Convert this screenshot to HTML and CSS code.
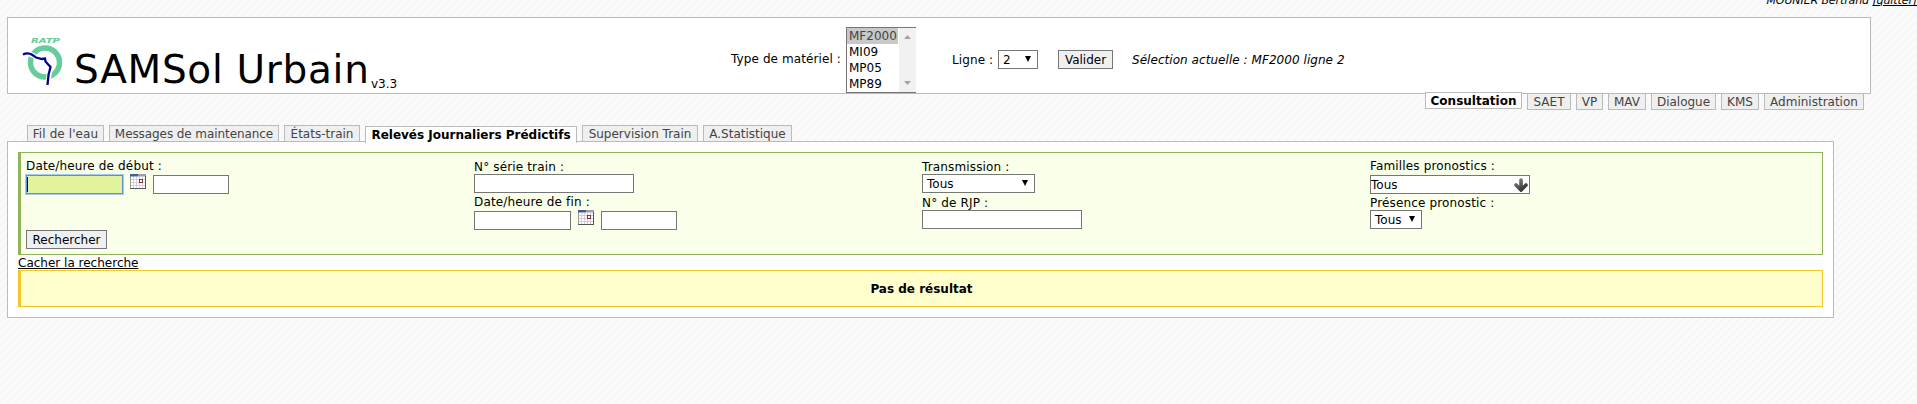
FILE: index.html
```html
<!DOCTYPE html>
<html lang="fr">
<head>
<meta charset="utf-8">
<title>SAMSol Urbain</title>
<link rel="stylesheet" href="styles.css">
</head>
<body>
<svg class="defs" width="0" height="0">
  <defs>
    <linearGradient id="steel" gradientUnits="userSpaceOnUse" x1="2" y1="0" x2="12" y2="14"><stop offset="0" stop-color="#888"/><stop offset="1" stop-color="#222"/></linearGradient>
    <symbol id="calendar" viewBox="0 0 16 15">
      <path d="M0 0h16v15H0z" fill="#fff"/>
      <path d="M3.500 3v11M6.500 3v11M9.500 3v11M12.500 3v11M1 5.500h14M1 8.500h14M1 11.500h14" stroke="#d9cbdc" fill="none"/>
      <path d="M.5 2v12.500" stroke="#999"/>
      <path d="M0 0h8v2.500H0z" fill="#4a5a94"/>
      <path d="M8 0h8v2.500H8z" fill="#a09ca8"/>
      <path d="M15.500 2v13M0 14.500h16" stroke="#555" fill="none"/>
      <rect x="9.500" y="5.500" width="3" height="3" fill="#fff" stroke="#7c3a3a"/>
    </symbol>
  </defs>
</svg>
<p class="user">MOUNIER Bertrand <a href="#">[quitter]</a></p>
<header class="banner">
  <svg class="logo" width="42" height="50" viewBox="0 0 42 50">
    <text class="logo-name" x="9" y="7" textLength="29" lengthAdjust="spacingAndGlyphs">RATP</text>
    <circle cx="23" cy="26.500" r="14.500" fill="none" stroke="#6c9" stroke-width="5.500"/>
    <path d="M1 18.500 L7 17.500 L12 20 L20 23.500 L24 24 L29 31 L27 39 L25.500 49" fill="none" stroke="#fff" stroke-width="5"/>
    <path d="M1 18.500 Q6 16 10.500 19 L14 21.500 L20 23 L23 22.500 L23.500 25.500 L28.500 31 L26.500 39 L25.500 49" fill="none" stroke="#00008b" stroke-width="2.300"/>
  </svg>
  <h1 class="title">SAMSol Urbain</h1>
  <span class="version">v3.3</span>
  <span class="type-label">Type de matériel :</span>
  <div class="listbox">
    <ul class="options"><li class="selected">MF2000</li><li>MI09</li><li>MP05</li><li>MP89</li></ul>
    <svg class="scroll" width="17" height="64"><path d="M5 11h7l-3.500-4zM5 53h7l-3.500 4z" fill="#a3a3a3"/></svg>
  </div>
  <span class="line-label">Ligne :</span>
  <div class="select line-select">2<i class="caret"></i></div>
  <button class="button validate">Valider</button>
  <em class="current">Sélection actuelle : MF2000 ligne 2</em>
</header>
<nav class="sections">
  <a class="consultation active">Consultation</a><a class="saet">SAET</a><a class="vp">VP</a><a class="mav">MAV</a><a class="dialogue">Dialogue</a><a class="kms">KMS</a><a class="administration">Administration</a>
</nav>
<nav class="tabs">
  <a class="fil">Fil de l'eau</a><a class="messages">Messages de maintenance</a><a class="etats">États-train</a><a class="releves active">Relevés Journaliers Prédictifs</a><a class="supervision">Supervision Train</a><a class="statistique">A.Statistique</a>
</nav>
<main class="panel">
  <form class="search">
    <div class="col start">
      <span class="label tall">Date/heure de début :</span>
      <div class="row">
        <div class="field date focused"><i class="cursor"></i></div>
        <svg class="calendar"><use href="#calendar"/></svg>
        <div class="field time"></div>
      </div>
      <button class="button submit" type="button">Rechercher</button>
    </div>
    <div class="col serial">
      <span class="label">N° série train :</span>
      <div class="field wide"></div>
      <span class="label tall end-label">Date/heure de fin :</span>
      <div class="row">
        <div class="field date"></div>
        <svg class="calendar"><use href="#calendar"/></svg>
        <div class="field time"></div>
      </div>
    </div>
    <div class="col transmission">
      <span class="label">Transmission :</span>
      <div class="select transmission-select">Tous<i class="caret"></i></div>
      <span class="label rjp-label">N° de RJP :</span>
      <div class="field wide"></div>
    </div>
    <div class="col families">
      <span class="label tall">Familles pronostics :</span>
      <div class="field wide combo">Tous
        <svg class="arrow" width="14" height="14" viewBox="0 0 14 14"><path d="M7 2v9M2 7l5 5 5-5" fill="none" stroke="url(#steel)" stroke-width="3.600" stroke-linecap="round"/></svg>
      </div>
      <span class="label presence-label">Présence pronostic :</span>
      <div class="select presence-select">Tous<i class="caret"></i></div>
    </div>
  </form>
  <a class="toggle" href="#">Cacher la recherche</a>
  <p class="result">Pas de résultat</p>
</main>
</body>
</html>
```
FILE: styles.css
```css
* { box-sizing: border-box; }
html { overflow: hidden; }
body {
  margin: 0;
  height: 404px;
  overflow: hidden;
  display: flow-root;
  font: 12px/14px "DejaVu Sans", Verdana, sans-serif;
  color: #000;
  background: repeating-linear-gradient(135deg, #f7f7f7 0, #f7f7f7 2px, #fbfbfb 3.500px, #fbfbfb 4.660px, #f7f7f7 5.660px);
}
a { color: inherit; }
.defs { display: block; }
.user { margin: -6px 0 9px; height: 14px; text-align: right; font-size: 11px; font-style: italic; letter-spacing: -.1px; white-space: nowrap; }

.banner { display: flex; align-items: flex-start; width: 1864px; height: 77px; margin-left: 7px; border: 1px solid #bbb; background: #fff; white-space: nowrap; }
.logo { flex: none; margin: 18px 0 0 14px; overflow: visible; }
.logo-name { font: italic bold 7px "DejaVu Sans", sans-serif; fill: #6c9; }
.title { width: 297px; margin: 28px 0 0 10px; font-size: 39px; line-height: 47px; font-weight: normal; letter-spacing: .7px; }
.version { width: 360px; margin-top: 59px; }
.type-label { width: 115px; margin-top: 34px; letter-spacing: .1px; }
.listbox { display: flex; width: 70px; height: 66px; margin-top: 9px; border: 1px solid #767676; border-right: 0; background: #fff; }
.options { width: 52px; margin: 0; padding: 0; list-style: none; line-height: 16px; }
.options li { padding-left: 2px; }
.options .selected { width: 51px; background: #c8c8c8; color: #444; }
.scroll { background: #f1f1f1; }
.line-label { width: 46px; margin: 35px 0 0 36px; letter-spacing: .1px; }
.line-select { width: 40px; margin-top: 32px; }
.validate { width: 55px; margin: 32px 0 0 20px; }
.current { margin: 35px 0 0 19px; letter-spacing: .05px; }

.select { display: flex; justify-content: space-between; height: 19px; padding: 0 6px 0 4px; border: 1px solid #767676; background: #fff; line-height: 18px; }
.caret { width: 0; height: 0; margin-top: 5px; border: solid transparent; border-width: 6px 3px 0; border-top-color: #000; }
.button { height: 19px; padding: 0; border: 1px solid #767676; border-radius: 0; background: #efefef; color: #000; font: 12px/18px "DejaVu Sans", Verdana, sans-serif; text-align: center; }

.sections, .tabs { display: flex; gap: 5px; white-space: nowrap; }
.sections a, .tabs a { height: 17px; border: 1px solid #bbb; background: #efefef; color: #444; line-height: 16px; text-align: center; }
.sections .active, .tabs .active { background: #fff; color: #000; font-weight: bold; }
.sections { margin: -1px 0 0 1425px; }
.sections .active { margin-top: -1px; }
.consultation { width: 97px; }
.saet { width: 44px; }
.vp { width: 27px; }
.mav { width: 38px; }
.dialogue { width: 65px; }
.kms { width: 38px; }
.administration { width: 100px; }
.tabs { position: relative; margin: 15px 0 -1px 27px; }
.tabs .active { margin: 1px 0 -1px; border-bottom: 0; }
.fil { width: 77px; letter-spacing: .1px; }
.messages { width: 170px; letter-spacing: -.08px; }
.etats { width: 76px; }
.releves { width: 212px; }
.supervision { width: 116px; }
.statistique { width: 89px; }

.panel { width: 1827px; height: 177px; margin-left: 7px; padding: 10px; border: 1px solid #bbb; background: #fff; }
.search { display: grid; grid-template-columns: repeat(4, 448px); height: 103px; padding-left: 5px; border: 1px solid #8fb45a; border-left-width: 3px; background: #f9ffe9; }
.col { display: flex; flex-direction: column; align-items: flex-start; }
.start, .families { padding-top: 6px; }
.serial, .transmission { padding-top: 7px; }
.label { height: 14px; letter-spacing: .15px; }
.tall { height: 16px; }
.end-label, .presence-label { margin-top: 2px; }
.rjp-label { margin-top: 3px; }
.row { display: flex; gap: 7px; }
.field { height: 19px; border: 1px solid #767676; background: #fff; line-height: 18px; }
.date { width: 97px; }
.time { width: 76px; }
.wide { width: 160px; }
.focused { padding: 1px 0; border-color: #5b8fd6; background: #e2f39b; box-shadow: 0 0 0 1px #a9c8ee; }
.cursor { display: block; width: 1px; height: 15px; background: #000; }
.calendar { width: 16px; height: 15px; margin-top: -1px; }
.combo { display: flex; justify-content: space-between; padding-right: 1px; }
.arrow { margin-top: 2px; }
.submit { width: 81px; margin-top: 36px; }
.transmission-select { width: 113px; }
.presence-select { width: 52px; }
.toggle { display: block; height: 15px; line-height: 16px; }
.result { height: 37px; margin: 0; border: 1px solid #f0c828; border-left-width: 3px; background: #ffffce; line-height: 36px; font-weight: bold; text-align: center; }
```
